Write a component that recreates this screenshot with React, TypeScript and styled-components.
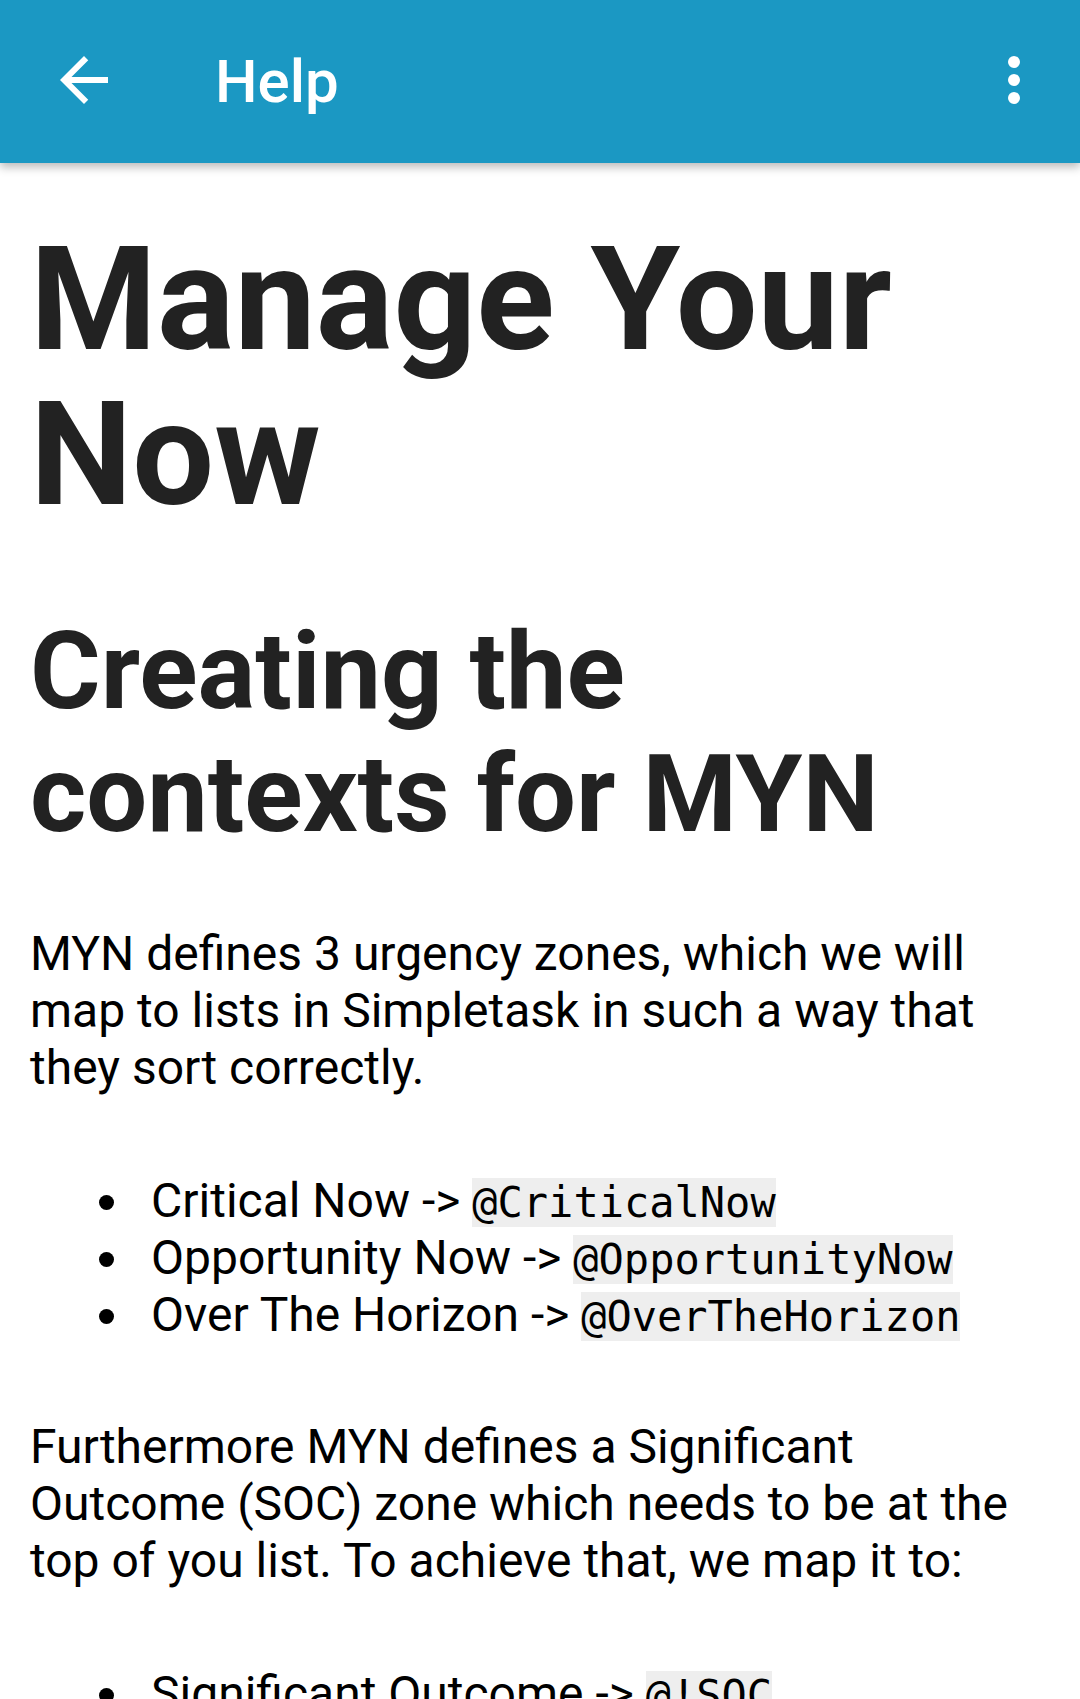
import React from "react";
import styled, { createGlobalStyle } from "styled-components";

const Global = createGlobalStyle`
  html, body { margin: 0; padding: 0; background: #ffffff; }
  body { font-family: Roboto, "Noto Sans", sans-serif; -webkit-font-smoothing: antialiased; }
  #root { min-height: 1699px; }
`;

const Page = styled.div`
  width: 1080px;
  min-height: 1699px;
  overflow: hidden;
  background: #ffffff;
`;

const AppBar = styled.header`
  position: relative;
  z-index: 1;
  height: 163px;
  box-sizing: border-box;
  display: flex;
  align-items: center;
  padding: 0 30px 4px 48px;
  background: #1b98c3;
  box-shadow: 0 4px 9px rgba(0, 0, 0, 0.28);
`;

const IconButton = styled.button`
  width: 72px;
  height: 72px;
  padding: 0;
  border: 0;
  background: transparent;
  display: flex;
  align-items: center;
  justify-content: center;
  flex: none;
  svg { display: block; }
`;

const Title = styled.h1`
  flex: 1;
  margin: 0 0 0 95px;
  font-family: Roboto, sans-serif;
  font-weight: 500;
  font-size: 60px;
  line-height: 72px;
  color: #ffffff;
  transform: translateY(2px);
`;

const Content = styled.main`
  padding: 0 28px 40px 30px;
  color: #000000;
  font-family: Roboto, sans-serif;
  font-size: 48px;
  line-height: normal;
`;

const H1 = styled.h1`
  margin: 59px 0 0;
  font-size: 145px;
  line-height: 155px;
  font-weight: 700;
  color: #222222;
`;

const H2 = styled.h2`
  margin: 78px 0 0;
  font-size: 108px;
  line-height: 123px;
  font-weight: 700;
  color: #222222;
`;

const Para = styled.p<{ $top: number }>`
  margin: ${(p) => p.$top}px 0 0;
`;

const List = styled.ul<{ $top: number }>`
  margin: ${(p) => p.$top}px 0 0;
  padding-left: 69px;
  list-style: none;
`;

const Item = styled.li`
  line-height: normal;
  &::before {
    content: "";
    display: inline-block;
    width: 15px;
    height: 15px;
    border-radius: 50%;
    background: #000000;
    margin-right: 37px;
    vertical-align: middle;
    position: relative;
    top: -2px;
  }
`;

const Code = styled.code`
  font-family: "DejaVu Sans Mono", "Liberation Mono", monospace;
  font-size: 42px;
  background: #eeeeee;
`;

const BackIcon = () => (
  <svg width="72" height="72" viewBox="0 0 24 24" fill="#ffffff">
    <path d="M20 11H7.83l5.59-5.59L12 4l-8 8 8 8 1.41-1.41L7.83 13H20v-2z" />
  </svg>
);

const MoreIcon = () => (
  <svg width="72" height="72" viewBox="0 0 24 24" fill="#ffffff">
    <circle cx="12" cy="6" r="2" />
    <circle cx="12" cy="12" r="2" />
    <circle cx="12" cy="18" r="2" />
  </svg>
);

const zones = [
  { name: "Critical Now", ctx: "@CriticalNow" },
  { name: "Opportunity Now", ctx: "@OpportunityNow" },
  { name: "Over The Horizon", ctx: "@OverTheHorizon" },
];

export default function App() {
  return (
    <Page>
      <Global />
      <AppBar>
        <IconButton aria-label="Back">
          <BackIcon />
        </IconButton>
        <Title>Help</Title>
        <IconButton aria-label="More options">
          <MoreIcon />
        </IconButton>
      </AppBar>
      <Content>
        <H1>Manage Your Now</H1>
        <H2>Creating the contexts for MYN</H2>
        <Para $top={69}>
          MYN defines 3 urgency zones, which we will map to lists in Simpletask in such a way that
          they sort correctly.
        </Para>
        <List $top={76}>
          {zones.map((z) => (
            <Item key={z.ctx}>
              {z.name} -&gt; <Code>{z.ctx}</Code>
            </Item>
          ))}
        </List>
        <Para $top={75}>
          Furthermore MYN defines a Significant Outcome (SOC) zone which needs to be at the top of
          you list. To achieve that, we map it to:
        </Para>
        <List $top={76}>
          <Item>
            Significant Outcome -&gt; <Code>@!SOC</Code>
          </Item>
        </List>
      </Content>
    </Page>
  );
}
